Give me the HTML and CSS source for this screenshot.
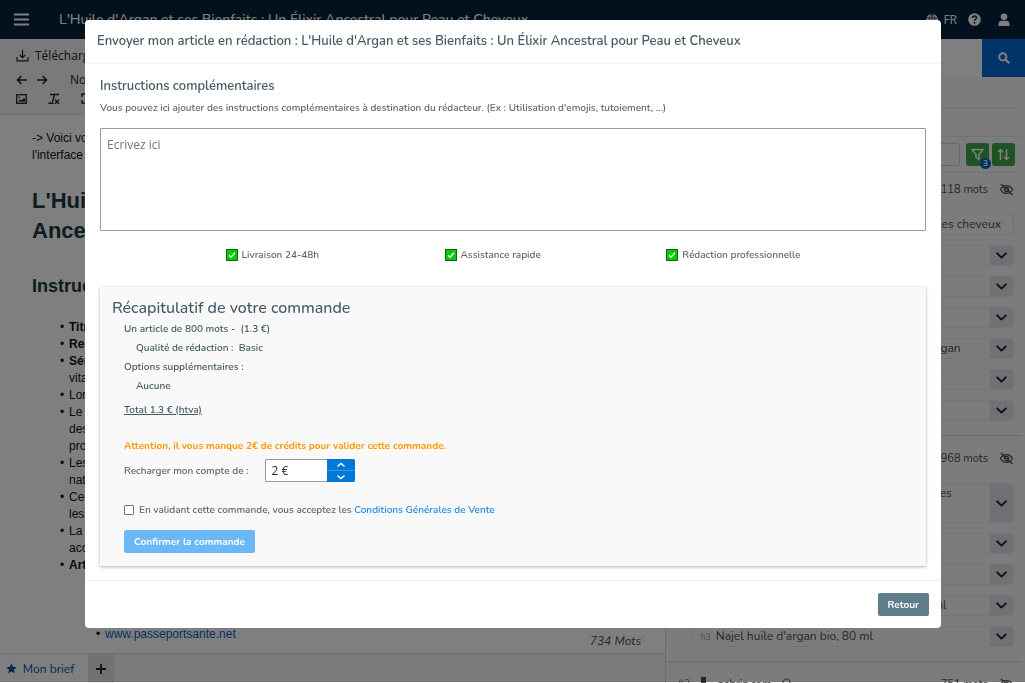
FILE: index.html
```html
<!DOCTYPE html>
<html lang="fr">
<head>
    <meta charset="UTF-8">
    <meta name="viewport" content="width=device-width, initial-scale=1.0">
    <title>Envoyer mon article en rédaction</title>
    <link rel="stylesheet" href="styles.css">
</head>
<body>
    <svg class="sprite" aria-hidden="true">
        <symbol id="chevron" viewBox="0 0 12 12">
            <path d="M2 4l4 4 4-4" fill="none" stroke="currentColor" stroke-width="1.8" stroke-linecap="round" stroke-linejoin="round"/>
        </symbol>
        <symbol id="eye-off" viewBox="0 0 16 14">
            <path d="M1.5 7C3 4.3 5.3 2.8 8 2.8S13 4.3 14.5 7C13 9.7 10.7 11.2 8 11.2S3 9.7 1.5 7z" fill="none" stroke="currentColor" stroke-width="1.3"/>
            <circle cx="8" cy="7" r="2.3" fill="none" stroke="currentColor" stroke-width="1.3"/>
            <path d="M2 1l12.5 12" stroke="currentColor" stroke-width="1.5"/>
        </symbol>
        <symbol id="check" viewBox="0 0 12 12">
            <rect x="0.5" y="0.5" width="11" height="11" fill="#0c0" stroke="#1d5c1d"/>
            <path d="M3 6.3l2 2L9 3.8" fill="none" stroke="#fff" stroke-width="1.3"/>
        </symbol>
    </svg>

    <div class="app">
        <header class="topbar">
            <button class="icon-button" aria-label="Menu">
                <svg width="15" height="13" viewBox="0 0 15 13"><path d="M0 1.5h15M0 6.5h15M0 11.5h15" stroke="currentColor" stroke-width="1.8"/></svg>
            </button>
            <h1 class="topbar-title">L'Huile d'Argan et ses Bienfaits : Un Élixir Ancestral pour Peau et Cheveux</h1>
            <div class="topbar-actions">
                <button class="icon-button lang">
                    <svg width="12" height="12" viewBox="0 0 12 12"><circle cx="6" cy="6" r="6" fill="currentColor"/><path d="M0 4h12M0 8h12M6 0v12M6 0c-4 3-4 9 0 12M6 0c4 3 4 9 0 12" fill="none" stroke="#06203a" stroke-width="0.8"/></svg>
                    FR
                </button>
                <button class="icon-button" aria-label="Aide">
                    <svg width="13" height="13" viewBox="0 0 13 13"><circle cx="6.5" cy="6.5" r="6.3" fill="currentColor"/><path d="M4.5 5c0-2.6 4-2.6 4-.2 0 1.5-2 1.4-2 3" fill="none" stroke="#06203a" stroke-width="1.5"/><circle cx="6.5" cy="9.7" r="1" fill="#06203a"/></svg>
                </button>
                <button class="icon-button" aria-label="Compte">
                    <svg width="12" height="14" viewBox="0 0 12 14"><circle cx="6" cy="3.8" r="3.3" fill="currentColor"/><path d="M0.5 13v-2c0-2 1.3-3.2 3-3.2h5c1.7 0 3 1.2 3 3.2v2z" fill="currentColor"/></svg>
                </button>
            </div>
        </header>

        <div class="workspace">
            <main class="editor">
                <div class="toolbar">
                    <div class="toolbar-row">
                        <button class="tool tool-text">
                            <svg width="13" height="13" viewBox="0 0 13 13"><path d="M1 8v3.8h11V8M6.5 1v7.5M3.8 6l2.7 2.7L9.2 6" fill="none" stroke="currentColor" stroke-width="1.2"/></svg>
                            Télécharger
                        </button>
                    </div>
                    <div class="toolbar-row small">
                        <button class="tool" aria-label="Annuler"><svg width="11" height="10" viewBox="0 0 11 10"><path d="M11 5H1.5M5.5 1L1.5 5l4 4" fill="none" stroke="currentColor" stroke-width="1.6"/></svg></button>
                        <button class="tool" aria-label="Rétablir"><svg width="11" height="10" viewBox="0 0 11 10"><path d="M0 5h9.5M5.5 1l4 4-4 4" fill="none" stroke="currentColor" stroke-width="1.6"/></svg></button>
                        <button class="tool tool-style">Normal</button>
                    </div>
                    <div class="toolbar-row small wide">
                        <button class="tool" aria-label="Image"><svg width="11" height="10" viewBox="0 0 11 10"><rect x="0.7" y="0.7" width="9.6" height="8.6" fill="none" stroke="currentColor" stroke-width="1.3"/><path d="M2 7.8l2.3-2.6 1.3 1.3L8 3.8l1.2 1.5v2.5z" fill="currentColor"/><circle cx="3.3" cy="3.3" r="0.9" fill="currentColor"/></svg></button>
                        <button class="tool" aria-label="Effacer la mise en forme"><svg width="12" height="12" viewBox="0 0 12 12"><path d="M2 1.5h9M6.5 1.5l-2 7.5M0.5 10.2h5M7 6.7l4 4M11 6.7l-4 4" fill="none" stroke="currentColor" stroke-width="1.4"/></svg></button>
                        <button class="tool" aria-label="Plein écran"><svg width="11" height="11" viewBox="0 0 11 11"><path d="M1 4V1h3M7 1h3v3M10 7v3H7M4 10H1V7" fill="none" stroke="currentColor" stroke-width="1.4"/></svg></button>
                    </div>
                </div>

                <article class="document">
                    <p>-&gt; Voici votre brief<br>l'interface</p>
                    <h2>L'Huile<br>Ancestral</h2>
                    <h3>Instructions</h3>
                    <ul>
                        <li><b>Titre</b></li>
                        <li><b>Rester</b></li>
                        <li><b>Sérum</b><br>vitamine</li>
                        <li>Longueur</li>
                        <li>Le texte<br>des<br>produits</li>
                        <li>Les huiles<br>naturelles</li>
                        <li>Ce texte<br>les</li>
                        <li>La peau<br>accès</li>
                        <li><b>Article</b></li>
                    </ul>
                    <ul class="sources">
                        <li><a href="#">www.passeportsante.net</a></li>
                    </ul>
                    <div class="word-count">734 Mots</div>
                </article>

                <nav class="tabs">
                    <button class="tab active">
                        <svg width="11" height="11" viewBox="0 0 12 12"><path d="M6 0.5l1.7 3.6 3.9.5-2.9 2.7.8 3.9L6 9.3l-3.5 1.9.8-3.9L.4 4.6l3.9-.5z" fill="currentColor"/></svg>
                        Mon brief
                    </button>
                    <button class="tab add" aria-label="Ajouter">
                        <svg width="10" height="10" viewBox="0 0 10 10"><path d="M5 0v10M0 5h10" stroke="currentColor" stroke-width="1.8"/></svg>
                    </button>
                </nav>
            </main>

            <aside class="panel">
                <form class="search">
                    <input type="text" aria-label="Rechercher">
                    <button aria-label="Lancer la recherche">
                        <svg width="12" height="12" viewBox="0 0 12 12"><circle cx="4.8" cy="4.8" r="3.6" fill="none" stroke="currentColor" stroke-width="2"/><path d="M7.5 7.5l3.7 3.7" stroke="currentColor" stroke-width="2.2"/></svg>
                    </button>
                </form>
                <div class="results">
                    <div class="results-head"></div>
                    <div class="filters">
                        <input type="text" aria-label="Filtrer">
                        <button class="filter-button" aria-label="Filtres">
                            <svg width="13" height="13" viewBox="0 0 13 13"><path d="M1 1.5h11L8 6.5v5L5 9.5v-3z" fill="none" stroke="currentColor" stroke-width="1.5" stroke-linejoin="round"/></svg>
                            <span class="badge">3</span>
                        </button>
                        <button class="filter-button" aria-label="Trier">
                            <svg width="13" height="13" viewBox="0 0 13 13"><path d="M3.5 12V1.5M1 4l2.5-2.5L6 4M9.5 1v10.5M7 9l2.500 2.500L12 9" fill="none" stroke="currentColor" stroke-width="1.5"/></svg>
                        </button>
                    </div>

                    <section class="result">
                        <div class="result-head">1118 mots <svg width="15" height="13"><use href="#eye-off"/></svg></div>
                        <div class="heading-row"><span class="heading-text end">les cheveux</span></div>
                        <div class="heading-row"><span class="heading-text"></span><button aria-label="Déplier"><svg width="13" height="13"><use href="#chevron"/></svg></button></div>
                        <div class="heading-row"><span class="heading-text"></span><button aria-label="Déplier"><svg width="13" height="13"><use href="#chevron"/></svg></button></div>
                        <div class="heading-row"><span class="heading-text"></span><button aria-label="Déplier"><svg width="13" height="13"><use href="#chevron"/></svg></button></div>
                        <div class="heading-row"><span class="heading-text"><small>h2</small>Tout retenir sur les bienfaits de l'huile d'argan</span><button aria-label="Déplier"><svg width="13" height="13"><use href="#chevron"/></svg></button></div>
                        <div class="heading-row"><span class="heading-text"></span><button aria-label="Déplier"><svg width="13" height="13"><use href="#chevron"/></svg></button></div>
                        <div class="heading-row"><span class="heading-text"></span><button aria-label="Déplier"><svg width="13" height="13"><use href="#chevron"/></svg></button></div>
                    </section>

                    <section class="result">
                        <div class="result-head">968 mots <svg width="15" height="13"><use href="#eye-off"/></svg></div>
                        <div class="heading-row tall"><span class="heading-text"><small>h1</small>Quels sont les meilleurs produits et 5 huiles<br>du moment</span><button aria-label="Déplier"><svg width="13" height="13"><use href="#chevron"/></svg></button></div>
                        <div class="heading-row"><span class="heading-text"></span><button aria-label="Déplier"><svg width="13" height="13"><use href="#chevron"/></svg></button></div>
                        <div class="heading-row"><span class="heading-text"></span><button aria-label="Déplier"><svg width="13" height="13"><use href="#chevron"/></svg></button></div>
                        <div class="heading-row"><span class="heading-text"><small>h3</small>Huile d'argan pure et biologique, pot 50 ml</span><button aria-label="Déplier"><svg width="13" height="13"><use href="#chevron"/></svg></button></div>
                        <div class="heading-row"><span class="heading-text"><small>h3</small>Najel huile d'argan bio, 80 ml</span><button aria-label="Déplier"><svg width="13" height="13"><use href="#chevron"/></svg></button></div>
                    </section>

                    <section class="result">
                        <div class="result-head">
                            <span class="result-rank">#3</span>
                            <svg width="5" height="14" viewBox="0 0 5 14"><path d="M0 0h5v14H0z" fill="currentColor"/></svg>
                            <span class="result-site">nahrin.com</span>
                            <svg width="9" height="12" viewBox="0 0 9 12"><circle cx="4.5" cy="4.5" r="3.5" fill="none" stroke="#8795a1" stroke-width="1.6"/></svg>
                            <span class="result-words">751 mots</span>
                            <svg width="15" height="13"><use href="#eye-off"/></svg>
                        </div>
                    </section>
                </div>
            </aside>
        </div>
    </div>

    <div class="overlay">
        <div class="modal" role="dialog" aria-labelledby="modalTitle">
            <div class="modal-header">
                <h2 id="modalTitle">Envoyer mon article en rédaction : L'Huile d'Argan et ses Bienfaits : Un Élixir Ancestral pour Peau et Cheveux</h2>
            </div>

            <div class="modal-body">
                <label class="section-title" for="instructions">Instructions complémentaires</label>
                <p class="hint">Vous pouvez ici ajouter des instructions complémentaires à destination du rédacteur. (Ex : Utilisation d'emojis, tutoiement, ...)</p>
                <textarea id="instructions" placeholder="Ecrivez ici"></textarea>

                <div class="features">
                    <span><svg width="12" height="12"><use href="#check"/></svg>Livraison 24-48h</span>
                    <span><svg width="12" height="12"><use href="#check"/></svg>Assistance rapide</span>
                    <span><svg width="12" height="12"><use href="#check"/></svg>Rédaction professionnelle</span>
                </div>

                <div class="summary">
                    <h3>Récapitulatif de votre commande</h3>
                    <div class="summary-body">
                        <p>Un article de 800 mots - &nbsp;(1.3 €)</p>
                        <p class="indent">Qualité de rédaction : &nbsp;Basic</p>
                        <p>Options supplémentaires :</p>
                        <p class="indent">Aucune</p>
                        <p class="total">Total 1.3 € (htva)</p>
                        <p class="warning">Attention, il vous manque 2€ de crédits pour valider cette commande.</p>
                        <div class="recharge">
                            <label for="credit">Recharger mon compte de :</label>
                            <div class="spinner">
                                <input type="text" id="credit" value="2 €">
                                <div class="spinner-buttons">
                                    <button aria-label="Augmenter"><svg width="10" height="6" viewBox="0 0 10 6"><path d="M1.5 4.5L5 1.5l3.5 3" fill="none" stroke="currentColor" stroke-width="1.4"/></svg></button>
                                    <button aria-label="Diminuer"><svg width="10" height="6" viewBox="0 0 10 6"><path d="M1.5 1.5L5 4.5l3.5-3" fill="none" stroke="currentColor" stroke-width="1.4"/></svg></button>
                                </div>
                            </div>
                        </div>
                        <div class="terms">
                            <input type="checkbox" id="terms">
                            <label for="terms">En validant cette commande, vous acceptez les <a href="#">Conditions Générales de Vente</a></label>
                        </div>
                        <button class="button confirm">Confirmer la commande</button>
                    </div>
                </div>
            </div>

            <div class="modal-footer">
                <button class="button back">Retour</button>
            </div>
        </div>
    </div>
</body>
</html>
```
FILE: styles.css
```css
* {
    margin: 0;
    padding: 0;
    box-sizing: border-box;
}

body {
    font-family: Nunito, 'Open Sans', sans-serif;
    font-size: 12px;
    color: #495057;
    background: #fff;
}

button,
input,
textarea {
    font-family: inherit;
    font-size: inherit;
    color: inherit;
    border: none;
    background: none;
}

button {
    cursor: pointer;
}

a {
    color: #1e88e5;
    text-decoration: none;
}

svg {
    display: block;
    flex: none;
}

.sprite {
    position: absolute;
    width: 0;
    height: 0;
}

.app {
    display: flex;
    flex-direction: column;
    height: 100vh;
    overflow: hidden;
}

/* Barre du haut */
.topbar {
    flex: none;
    display: flex;
    align-items: center;
    height: 39px;
    padding: 0 13px 0 14px;
    background: #06203a;
    color: #fff;
}

.topbar-title {
    flex: 1;
    margin-left: 30px;
    font-size: 14px;
    font-weight: 500;
    white-space: nowrap;
}

.topbar-actions {
    display: flex;
    align-items: center;
    gap: 11px;
}

.topbar-actions .icon-button:last-child {
    margin: 0 2px 0 6px;
}

.lang {
    display: flex;
    align-items: center;
    gap: 5px;
    font-family: 'Open Sans', sans-serif;
}

/* Editeur */
.workspace {
    flex: 1;
    display: flex;
    min-height: 0;
}

.editor {
    flex: 1;
    display: flex;
    flex-direction: column;
    min-width: 0;
    border-right: 1px solid #d8dadd;
}

.toolbar {
    flex: none;
    padding: 7px 16px 6px;
    background: #f4f5f7;
    border-bottom: 1px solid #e3e5e8;
    color: #222;
    font-family: 'Open Sans', sans-serif;
}

.toolbar-row {
    display: flex;
    align-items: center;
    height: 18px;
    gap: 10px;
}

.toolbar-row.small {
    height: 19px;
}

.toolbar-row:first-child {
    margin-bottom: 6px;
}

.toolbar-row.wide {
    gap: 21px;
}

.tool-text {
    display: flex;
    align-items: center;
    gap: 6px;
}

.tool-style {
    margin-left: 12px;
    font-size: 12px;
}

.document {
    position: relative;
    flex: 1;
    min-height: 0;
    overflow: hidden;
    padding: 15px 32px 0;
    font-family: 'Liberation Sans', Arial, sans-serif;
    line-height: 17px;
    color: #111;
}

.document h2 {
    margin: 22px 0 31px;
    font-size: 22px;
    line-height: 30px;
    color: #1c3946;
}

.document h3 {
    margin-bottom: 24px;
    font-size: 18px;
    line-height: 18px;
    color: #1c3946;
}

.document ul {
    list-style: none;
    padding-left: 37px;
}

.document li::before {
    content: '•';
    float: left;
    margin-left: -9px;
}

.document .sources {
    margin-top: 52px;
    padding-left: 73px;
}

.document .sources a {
    color: #0b63c5;
}

.word-count {
    position: absolute;
    right: 24px;
    bottom: 3px;
    font-family: Nunito, 'Open Sans', sans-serif;
    font-style: italic;
    line-height: 18px;
    color: #495057;
}

.tabs {
    flex: none;
    display: flex;
    height: 30px;
    background: #f4f5f7;
    border-top: 1px solid #d8dadd;
}

.tab {
    display: flex;
    align-items: center;
    justify-content: center;
    color: #222;
}

.tab.active {
    gap: 6px;
    width: 88px;
    padding-right: 8px;
    background: #fff;
    color: #0b4fa5;
}

.tab.add {
    width: 26px;
    background: #e4e5e7;
}

/* Panneau de droite */
.panel {
    flex: none;
    display: flex;
    flex-direction: column;
    width: 35%;
    background: #f8f9fa;
}

.search {
    flex: none;
    display: flex;
    height: 38px;
    margin-bottom: 30px;
}

.search input {
    flex: 1;
    background: #fff;
}

.search button {
    display: flex;
    align-items: center;
    justify-content: center;
    width: 43px;
    background: #0068d0;
    color: #fff;
}

.results {
    flex: 1;
    min-height: 0;
    overflow: hidden;
    margin: 0 4px 0 2px;
    border-top: 1px solid #e3e5e8;
}

.results-head {
    height: 29px;
    border-bottom: 1px solid #e3e5e8;
}

.filters {
    display: flex;
    align-items: center;
    gap: 3px;
    height: 36px;
    padding: 0 6px 0 24px;
    border-bottom: 1px solid #e3e5e8;
}

.filters input {
    flex: 1;
    height: 23px;
    margin-right: 3px;
    border: 1px solid #ccc;
    border-radius: 3px;
}

.filter-button {
    position: relative;
    display: flex;
    align-items: center;
    justify-content: center;
    width: 23px;
    height: 23px;
    border-radius: 3px;
    background: #3fa746;
    color: #fff;
}

.badge {
    position: absolute;
    right: -2px;
    bottom: -3px;
    width: 11px;
    height: 11px;
    border-radius: 50%;
    background: #0b63c5;
    font-size: 8px;
    font-weight: 700;
    line-height: 11px;
}

.result {
    padding: 7px 7px 14px 24px;
    border-bottom: 1px solid #d3d5d8;
}

.result-head {
    display: flex;
    align-items: center;
    justify-content: flex-end;
    gap: 11px;
    height: 18px;
    margin-bottom: 16px;
    font-size: 11px;
}

.result + .result .result-head {
    height: 30px;
    margin-bottom: 10px;
}

.result-rank {
    margin-left: -15px;
    color: #8795a1;
}

.result-words {
    margin-left: auto;
}

.heading-row {
    display: flex;
    height: 21px;
    margin-bottom: 10px;
    border: 1px solid #e6e8ea;
    border-radius: 4px;
    overflow: hidden;
}

.heading-row:last-child {
    margin-bottom: 0;
}

.heading-row.tall {
    height: 40px;
}

.heading-text {
    flex: 1;
    padding-left: 7px;
    line-height: 19px;
    white-space: nowrap;
}

.heading-text.end {
    padding-right: 12px;
    text-align: right;
}

.heading-text small {
    margin-right: 5px;
    font-size: 9px;
    color: #9aa5ad;
}

.heading-row button {
    display: flex;
    align-items: center;
    justify-content: center;
    width: 23px;
    background: #dfe3e8;
    color: #222;
}

/* Fenêtre modale */
.overlay {
    position: fixed;
    top: 0;
    right: 0;
    bottom: 1px;
    left: 0;
    padding: 20px 84px 20px 85px;
    background: rgba(0, 0, 0, 0.5);
}

.modal {
    background: #fff;
    border-radius: 4px;
    color: #666;
    font-size: 10px;
}

.modal-header {
    padding: 11px 12px;
    border-bottom: 1px solid #f2f2f2;
}

.modal-header h2 {
    font-size: 13px;
    font-weight: 600;
    line-height: 21px;
    color: #455a64;
}

.modal-body {
    padding: 12px 15px 14px;
}

.section-title {
    display: block;
    font-size: 13px;
    font-weight: 600;
    line-height: 20px;
    color: #455a64;
}

.hint {
    margin: 4px 0 12px;
    line-height: 16px;
    font-weight: 600;
}

textarea {
    display: block;
    width: 100%;
    height: 103px;
    padding: 8px 6px;
    border: 1px solid #999;
    border-radius: 1px;
    resize: none;
    font-family: 'Open Sans', sans-serif;
    font-size: 12px;
    line-height: 16px;
}

textarea::placeholder {
    color: #757575;
}

.features {
    display: flex;
    justify-content: space-evenly;
    margin: 15px 0 23px;
    line-height: 18px;
    font-weight: 600;
}

.features span {
    display: flex;
    align-items: center;
    gap: 4px;
}

.summary {
    padding: 9px 12px 13px;
    background: #f9f9f9;
    box-shadow: 0 1px 3px rgba(0, 0, 0, 0.3);
}

.summary h3 {
    font-size: 16px;
    font-weight: 500;
    line-height: 24px;
    color: #455a64;
}

.summary-body {
    padding-left: 12px;
    font-weight: 600;
}

.summary-body p {
    line-height: 19px;
    color: #455a64;
}

.summary-body .indent {
    padding-left: 12px;
}

.summary-body .total {
    margin: 5px 0 17px;
    text-decoration: underline;
}

.summary-body .warning {
    margin-bottom: 3px;
    color: #ff9800;
    font-weight: 700;
}

.recharge {
    display: flex;
    align-items: center;
    gap: 16px;
}

.spinner {
    display: flex;
    width: 90px;
    height: 23px;
}

.spinner input {
    flex: 1;
    min-width: 0;
    padding-left: 6px;
    border: 1px solid #999;
    border-right: none;
    border-radius: 2px 0 0 2px;
    background: #fff;
    font-family: 'Open Sans', sans-serif;
    font-size: 12px;
    color: #333;
}

.spinner-buttons {
    display: flex;
    flex-direction: column;
    width: 28px;
    gap: 1px;
    border-radius: 0 2px 2px 0;
    background: #3d97e0;
    overflow: hidden;
}

.spinner-buttons button {
    flex: 1;
    display: flex;
    align-items: center;
    justify-content: center;
    background: #0078d7;
    color: #fff;
}

.terms {
    display: flex;
    align-items: center;
    gap: 5px;
    margin: 18px 0 10px;
    line-height: 20px;
}

.terms input {
    appearance: none;
    width: 10px;
    height: 10px;
    border: 1px solid #767676;
    border-radius: 1px;
    background: #fff;
}

.terms input:checked {
    background: #0078d7;
}

.button {
    display: block;
    height: 23px;
    padding: 0 10px;
    border-radius: 2px;
    color: #fff;
    font-weight: 700;
}

.confirm {
    background: #6cb8f6;
}

.modal-footer {
    display: flex;
    justify-content: flex-end;
    padding: 12px;
    border-top: 1px solid #eee;
}

.back {
    background: #607d8b;
}
```
